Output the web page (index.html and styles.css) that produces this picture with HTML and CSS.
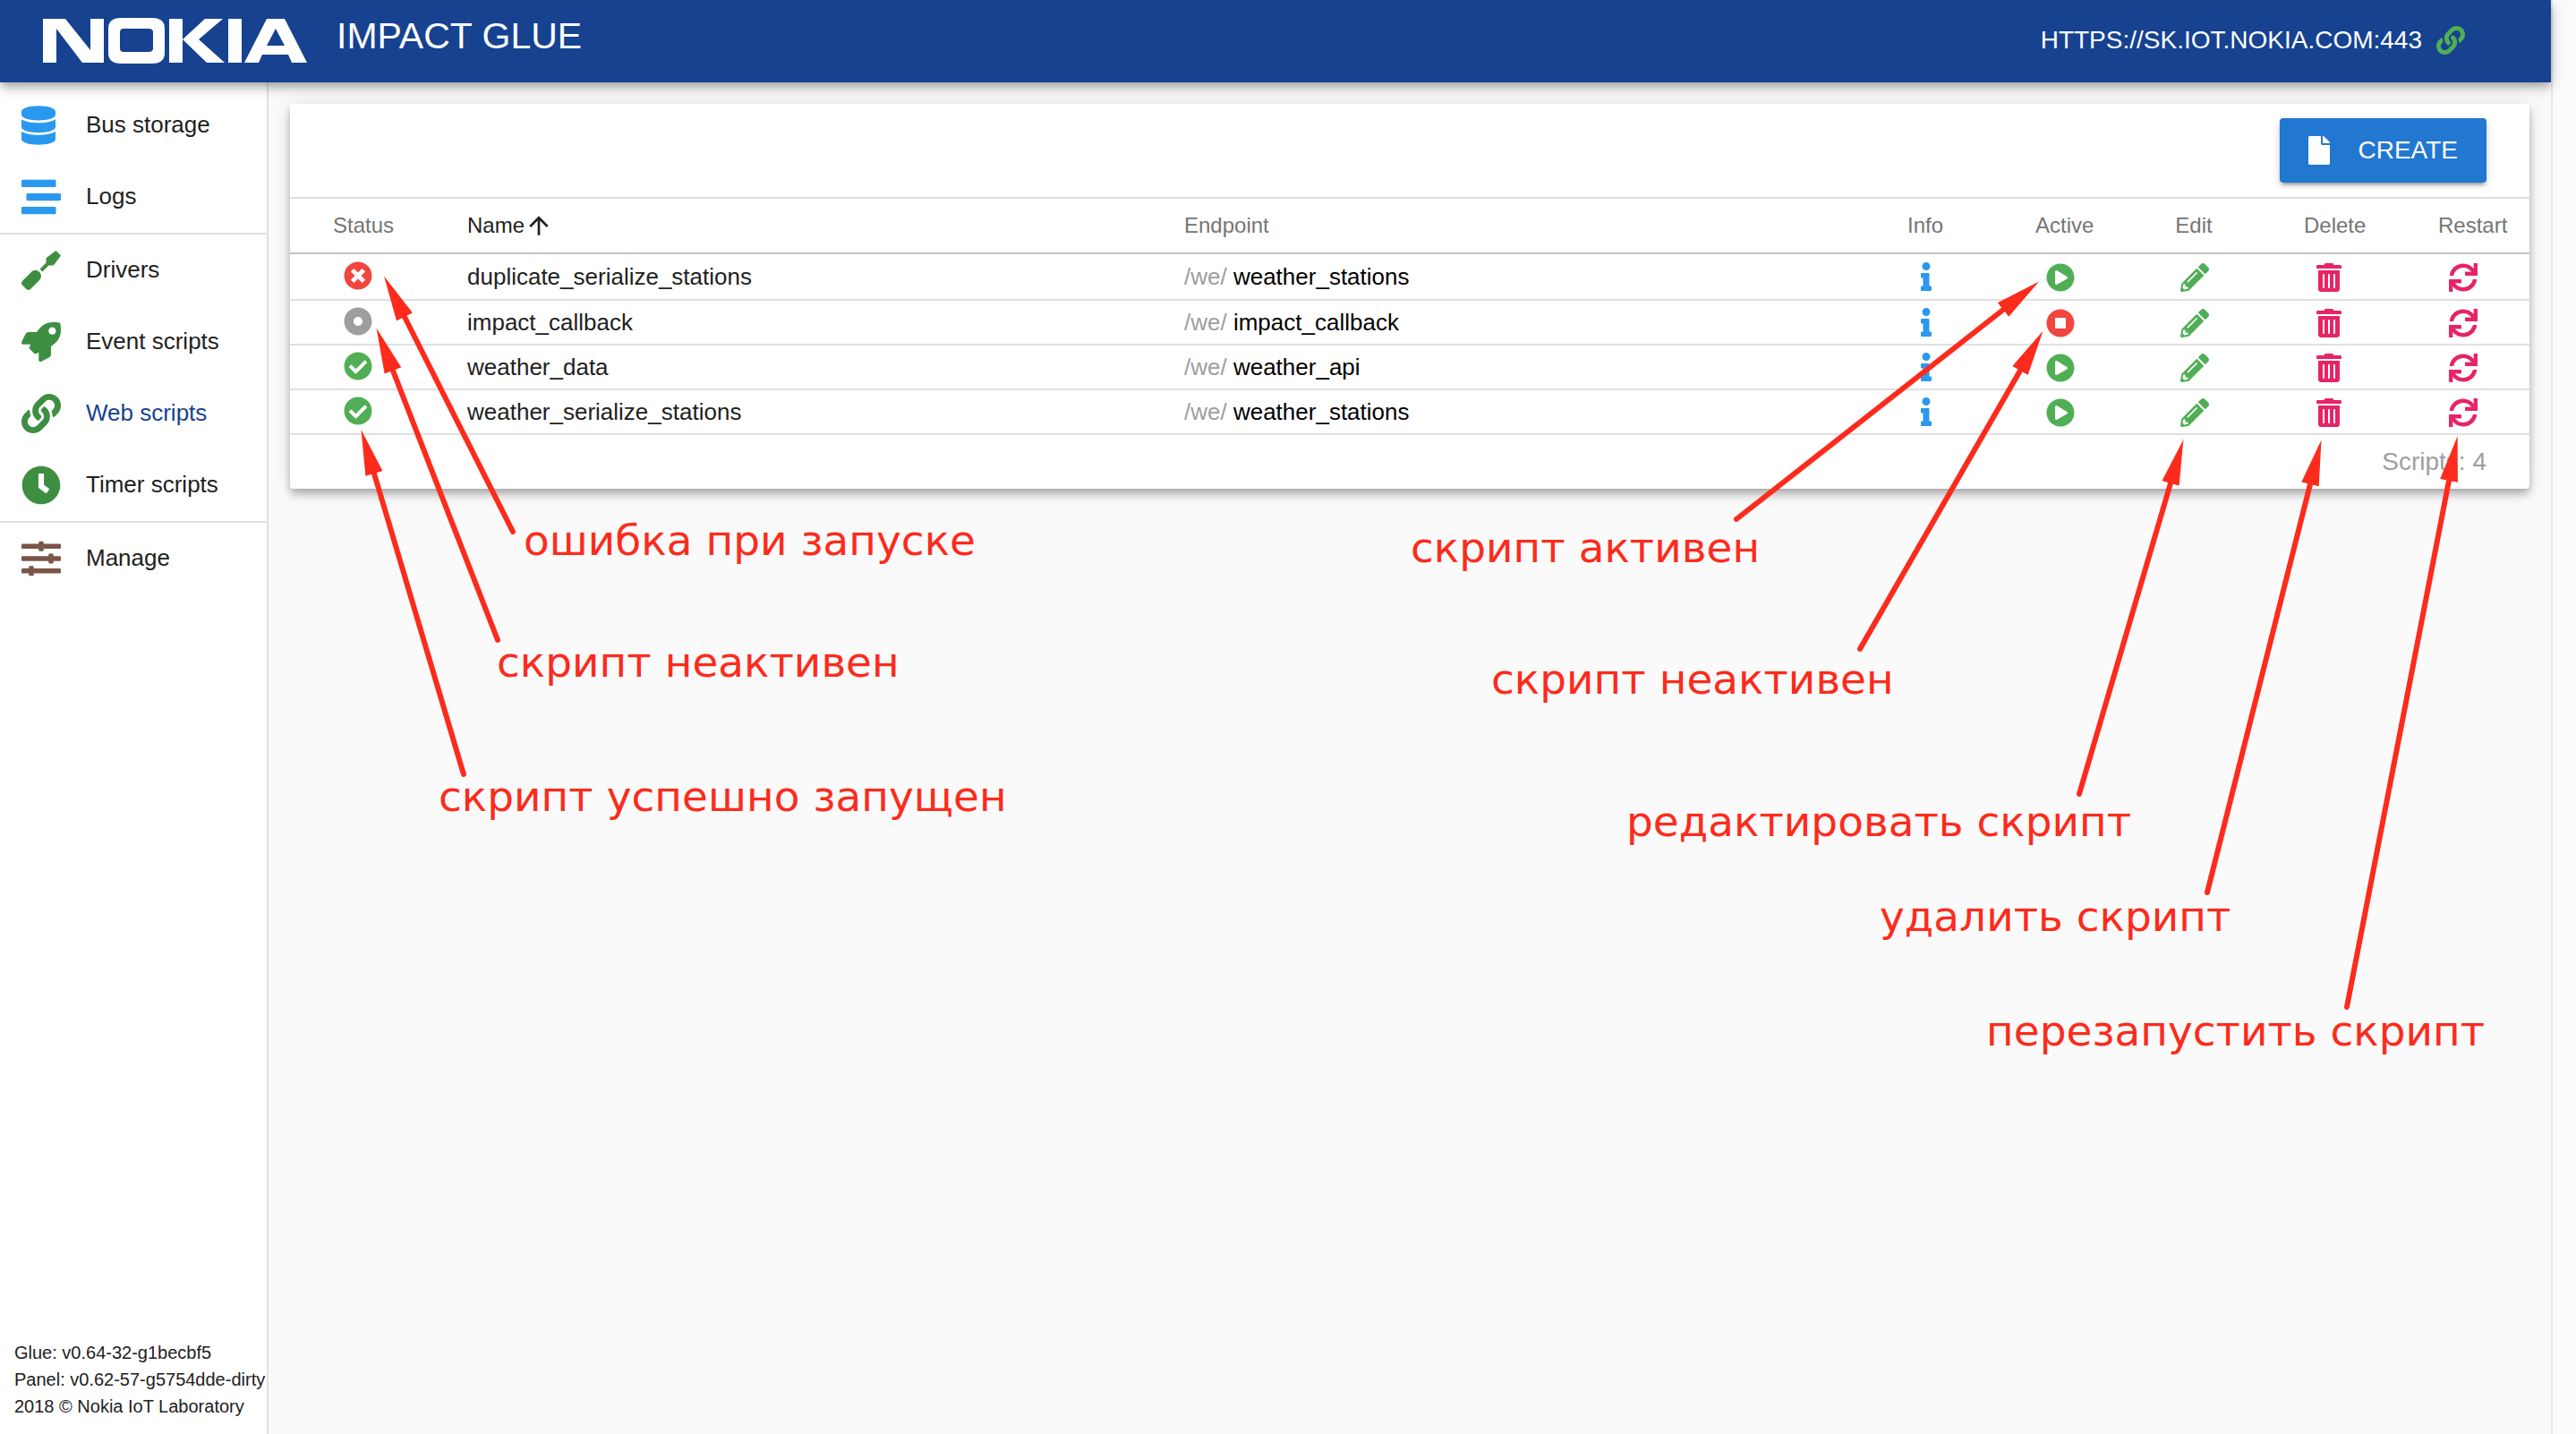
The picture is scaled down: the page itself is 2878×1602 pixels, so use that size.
FILE: index.html
```html
<!DOCTYPE html>
<html lang="en">
<head>
<meta charset="utf-8">
<title>IMPACT GLUE</title>
<link rel="stylesheet" href="styles.css">
</head>
<body>
<svg class="sprite" aria-hidden="true">
  <symbol id="database" viewBox="0 0 448 512"><path d="M448 73.143v45.714C448 159.143 347.667 192 224 192S0 159.143 0 118.857V73.143C0 32.857 100.333 0 224 0s224 32.857 224 73.143zM448 176v102.857C448 319.143 347.667 352 224 352S0 319.143 0 278.857V176c48.125 33.143 136.208 48.572 224 48.572S399.874 209.143 448 176zm0 160v102.857C448 479.143 347.667 512 224 512S0 479.143 0 438.857V336c48.125 33.143 136.208 48.572 224 48.572S399.874 369.143 448 336z"/></symbol>
  <symbol id="stream" viewBox="0 0 512 512"><path d="M16 128h416c8.84 0 16-7.16 16-16V48c0-8.84-7.16-16-16-16H16C7.16 32 0 39.16 0 48v64c0 8.84 7.16 16 16 16zm480 80H80c-8.84 0-16 7.16-16 16v64c0 8.84 7.16 16 16 16h416c8.84 0 16-7.16 16-16v-64c0-8.84-7.16-16-16-16zm-64 176H16c-8.84 0-16 7.16-16 16v64c0 8.84 7.16 16 16 16h416c8.84 0 16-7.16 16-16v-64c0-8.84-7.16-16-16-16z"/></symbol>
  <symbol id="screwdriver" viewBox="0 0 512 512"><path d="M448 0L320 96v62.06l-83.03 83.03c6.79 4.25 13.27 9.06 19.07 14.87 5.8 5.8 10.62 12.28 14.87 19.07L353.94 192H416l96-128-64-64zM128 278.59L10.92 395.67c-14.55 14.55-14.55 38.15 0 52.71l52.7 52.7c14.56 14.56 38.15 14.56 52.71 0L233.41 384c29.11-29.11 29.11-76.3 0-105.41s-76.3-29.11-105.41 0z"/></symbol>
  <symbol id="rocket" viewBox="0 0 512 512"><path d="M505.1 19.1C503.8 13 499 8.2 492.9 6.9 460.7 0 435.5 0 410.4 0 307.2 0 245.3 55.2 199.1 128H94.9c-18.2 0-34.8 10.3-42.9 26.5L2.6 253.3c-8 16 3.6 34.7 21.5 34.7h95.1c-5.9 12.8-11.9 25.5-18 37.7-3.1 6.2-1.9 13.6 3 18.5l63.6 63.6c4.9 4.9 12.3 6.1 18.5 3 12.2-6.1 24.9-12 37.7-17.9V488c0 17.8 18.8 29.4 34.7 21.5l98.7-49.4c16.3-8.1 26.5-24.8 26.5-42.9V312.8c72.6-46.3 128-108.4 128-211.1.1-25.2.1-50.4-6.8-82.6zM400 160c-26.5 0-48-21.5-48-48s21.5-48 48-48 48 21.5 48 48-21.5 48-48 48z"/></symbol>
  <symbol id="link" viewBox="0 0 512 512"><path d="M326.612 185.391c59.747 59.809 58.927 155.698.36 214.59-.11.12-.24.25-.36.37l-67.2 67.2c-59.27 59.27-155.699 59.262-214.96 0-59.27-59.26-59.27-155.7 0-214.96l37.106-37.106c9.84-9.84 26.786-3.3 27.294 10.606.648 17.722 3.826 35.527 9.69 52.721 1.986 5.822.567 12.262-3.783 16.612l-13.087 13.087c-28.026 28.026-28.905 73.66-1.155 101.96 28.024 28.579 74.086 28.749 102.325.51l67.2-67.19c28.191-28.191 28.073-73.757 0-101.83-3.701-3.694-7.429-6.564-10.341-8.569a16.037 16.037 0 0 1-6.947-12.606c-.396-10.567 3.348-21.456 11.698-29.806l21.054-21.055c5.521-5.521 14.182-6.199 20.584-1.731a152.482 152.482 0 0 1 20.522 17.197zM467.547 44.449c-59.261-59.262-155.69-59.27-214.96 0l-67.2 67.2c-.12.12-.25.25-.36.37-58.566 58.892-59.387 154.781.36 214.59a152.454 152.454 0 0 0 20.521 17.196c6.402 4.468 15.064 3.789 20.584-1.731l21.054-21.055c8.35-8.35 12.094-19.239 11.698-29.806a16.037 16.037 0 0 0-6.947-12.606c-2.912-2.005-6.64-4.875-10.341-8.569-28.073-28.073-28.191-73.639 0-101.83l67.2-67.19c28.239-28.239 74.3-28.069 102.325.51 27.75 28.3 26.872 73.934-1.155 101.96l-13.087 13.087c-4.35 4.35-5.769 10.79-3.783 16.612 5.864 17.194 9.042 34.999 9.69 52.721.509 13.906 17.454 20.446 27.294 10.606l37.106-37.106c59.271-59.259 59.271-155.699.001-214.959z"/></symbol>
  <symbol id="clock" viewBox="0 0 512 512"><path d="M256 8C119 8 8 119 8 256s111 248 248 248 248-111 248-248S393 8 256 8zm57.1 350.1L224.9 294c-3.1-2.3-4.9-5.9-4.9-9.7V116c0-6.6 5.4-12 12-12h48c6.6 0 12 5.4 12 12v137.7l63.5 46.2c5.4 3.9 6.5 11.4 2.6 16.8l-28.2 38.8c-3.9 5.3-11.4 6.5-16.8 2.6z"/></symbol>
  <symbol id="sliders" viewBox="0 0 512 512"><path d="M496 384H160v-16c0-8.8-7.2-16-16-16h-32c-8.8 0-16 7.2-16 16v16H16c-8.8 0-16 7.2-16 16v32c0 8.8 7.2 16 16 16h80v16c0 8.8 7.2 16 16 16h32c8.8 0 16-7.2 16-16v-16h336c8.8 0 16-7.2 16-16v-32c0-8.8-7.2-16-16-16zm0-160h-80v-16c0-8.8-7.2-16-16-16h-32c-8.8 0-16 7.2-16 16v16H16c-8.8 0-16 7.2-16 16v32c0 8.8 7.2 16 16 16h336v16c0 8.8 7.2 16 16 16h32c8.8 0 16-7.2 16-16v-16h80c8.8 0 16-7.2 16-16v-32c0-8.8-7.2-16-16-16zm0-160H288V48c0-8.8-7.2-16-16-16h-32c-8.8 0-16 7.2-16 16v16H16C7.2 64 0 71.2 0 80v32c0 8.8 7.2 16 16 16h208v16c0 8.8 7.2 16 16 16h32c8.8 0 16-7.2 16-16v-16h208c8.8 0 16-7.2 16-16V80c0-8.8-7.2-16-16-16z"/></symbol>
  <symbol id="times-circle" viewBox="0 0 512 512"><path d="M256 8C119 8 8 119 8 256s111 248 248 248 248-111 248-248S393 8 256 8zm121.6 313.1c4.7 4.7 4.7 12.3 0 17L338 377.6c-4.7 4.7-12.3 4.7-17 0L256 312l-65.1 65.6c-4.7 4.7-12.3 4.7-17 0L134.4 338c-4.7-4.7-4.7-12.3 0-17l65.6-65-65.6-65.1c-4.7-4.7-4.7-12.3 0-17l39.6-39.6c4.7-4.7 12.3-4.7 17 0l65 65.7 65.1-65.6c4.7-4.7 12.3-4.7 17 0l39.6 39.6c4.7 4.7 4.7 12.3 0 17L312 256l65.6 65.1z"/></symbol>
  <symbol id="dot-circle" viewBox="0 0 512 512"><path d="M256 8C119.033 8 8 119.033 8 256s111.033 248 248 248 248-111.033 248-248S392.967 8 256 8zm80 248c0 44.112-35.888 80-80 80s-80-35.888-80-80 35.888-80 80-80 80 35.888 80 80z" fill-rule="evenodd"/></symbol>
  <symbol id="check-circle" viewBox="0 0 512 512"><path fill-rule="evenodd" d="M504 256c0 136.967-111.033 248-248 248S8 392.967 8 256 119.033 8 256 8s248 111.033 248 248zM227.314 387.314l184-184c6.248-6.248 6.248-16.379 0-22.627l-22.627-22.627c-6.248-6.249-16.379-6.249-22.628 0L216 308.118l-70.059-70.059c-6.248-6.248-16.379-6.248-22.628 0l-22.627 22.627c-6.248 6.248-6.248 16.379 0 22.627l104 104c6.249 6.249 16.379 6.249 22.628.001z"/></symbol>
  <symbol id="play-circle" viewBox="0 0 512 512"><path fill-rule="evenodd" d="M371.7 238l-176-107c-15.8-8.8-35.7 2.5-35.7 21v208c0 18.4 19.8 29.8 35.7 21l176-101c16.4-9.1 16.4-32.8 0-42zM504 256C504 119 393 8 256 8S8 119 8 256s111 248 248 248 248-111 248-248z"/></symbol>
  <symbol id="stop-circle" viewBox="0 0 512 512"><path fill-rule="evenodd" d="M256 8C119 8 8 119 8 256s111 248 248 248 248-111 248-248S393 8 256 8zm96 328c0 8.8-7.2 16-16 16H176c-8.8 0-16-7.2-16-16V176c0-8.8 7.2-16 16-16h160c8.8 0 16 7.2 16 16v160z"/></symbol>
  <symbol id="info" viewBox="0 0 192 512"><path d="M20 424.229h20V279.771H20c-11.046 0-20-8.954-20-20V212c0-11.046 8.954-20 20-20h112c11.046 0 20 8.954 20 20v212.229h20c11.046 0 20 8.954 20 20V492c0 11.046-8.954 20-20 20H20c-11.046 0-20-8.954-20-20v-47.771c0-11.046 8.954-20 20-20zM96 0C56.235 0 24 32.235 24 72s32.235 72 72 72 72-32.235 72-72S135.764 0 96 0z"/></symbol>
  <symbol id="pencil" viewBox="0 0 512 512"><path fill-rule="evenodd" d="M497.9 142.1l-46.1 46.1c-4.7 4.7-12.3 4.7-17 0l-111-111c-4.7-4.7-4.7-12.3 0-17l46.1-46.1c18.7-18.7 49.1-18.7 67.9 0l60.1 60.1c18.8 18.7 18.8 49.1 0 67.9zM284.2 99.8L21.6 362.4.4 483.9c-2.9 16.4 11.4 30.6 27.8 27.8l121.5-21.3 262.6-262.6c4.7-4.7 4.7-12.3 0-17l-111-111c-4.8-4.7-12.4-4.7-17.1 0zM124.1 339.9c-5.5-5.5-5.5-14.3 0-19.8l154-154c5.5-5.5 14.3-5.5 19.8 0s5.5 14.3 0 19.8l-154 154c-5.5 5.5-14.3 5.5-19.8 0zM88 424h48v36.3l-64.5 11.3-31.1-31.1L51.7 376H88v48z"/></symbol>
  <symbol id="trash" viewBox="0 0 448 512"><path fill-rule="evenodd" d="M0 84V56c0-13.3 10.7-24 24-24h112l9.4-18.7c4-8.2 12.3-13.3 21.4-13.3h114.3c9.1 0 17.4 5.1 21.5 13.3L312 32h112c13.3 0 24 10.7 24 24v28c0 6.6-5.4 12-12 12H12C5.4 96 0 90.6 0 84zm416 56v324c0 26.5-21.5 48-48 48H80c-26.5 0-48-21.5-48-48V140c0-6.6 5.4-12 12-12h360c6.6 0 12 5.4 12 12zm-272 68c0-8.8-7.2-16-16-16s-16 7.2-16 16v224c0 8.8 7.2 16 16 16s16-7.2 16-16V208zm96 0c0-8.8-7.2-16-16-16s-16 7.2-16 16v224c0 8.8 7.2 16 16 16s16-7.2 16-16V208zm96 0c0-8.8-7.2-16-16-16s-16 7.2-16 16v224c0 8.8 7.2 16 16 16s16-7.2 16-16V208z"/></symbol>
  <symbol id="sync" viewBox="0 0 512 512"><path d="M440.935 12.574l3.966 82.766C399.416 41.904 331.674 8 256 8 134.813 8 33.933 94.924 12.296 209.824 10.908 217.193 16.604 224 24.103 224h49.084c5.57 0 10.377-3.842 11.676-9.259C103.407 137.408 172.931 80 256 80c60.893 0 114.512 30.856 146.104 77.801l-101.53-4.865c-6.845-.328-12.574 5.133-12.574 11.986v47.411c0 6.627 5.373 12 12 12h200.333c6.627 0 12-5.373 12-12V12c0-6.627-5.373-12-12-12h-47.411c-6.853 0-12.315 5.729-11.987 12.574zM256 432c-60.895 0-114.517-30.858-146.109-77.805l101.868 4.871c6.845.327 12.573-5.134 12.573-11.986v-47.412c0-6.627-5.373-12-12-12H12c-6.627 0-12 5.373-12 12V500c0 6.627 5.373 12 12 12h47.385c6.863 0 12.328-5.745 11.985-12.599l-4.129-82.575C112.725 470.166 180.405 504 256 504c121.187 0 222.067-86.924 243.704-201.824 1.388-7.369-4.308-14.176-11.807-14.176h-49.084c-5.57 0-10.377 3.842-11.676 9.259C408.593 374.592 339.069 432 256 432z"/></symbol>
  <symbol id="file" viewBox="0 0 384 512"><path d="M224 136V0H24C10.7 0 0 10.7 0 24v464c0 13.3 10.7 24 24 24h336c13.3 0 24-10.7 24-24V160H248c-13.2 0-24-10.8-24-24zm160-14.1v6.1H256V0h6.1c6.4 0 12.5 2.5 17 7l97.9 98c4.5 4.5 7 10.6 7 16.9z"/></symbol>
  <symbol id="arrow-up" viewBox="0 0 24 24"><path d="M4 12l1.41 1.41L11 7.83V20h2V7.83l5.58 5.59L20 12l-8-8-8 8z"/></symbol>
</svg>

<div class="app">
  <header class="topbar">
    <svg class="logo" viewBox="0 0 296 50" role="img" aria-label="Nokia">
      <path d="M0 49V0h25l28 35V0h15v49H44L15 11v38z"/>
      <path fill-rule="evenodd" d="M87-1h35q14 0 14 12v27q0 12-14 12H87q-14 0-14-12V11Q73-1 87-1zm3 12q-4 0-4 4v18q0 4 4 4h28q5 0 5-4V15q0-4-5-4z"/>
      <path d="M141 0h15v49h-15zM156 23l25-23h20l-27 23 29 26h-20zM207 0h15v49h-15z"/>
      <path fill-rule="evenodd" d="M225 49L250 0h20l25 49h-17l-4-9h-29l-4 9zm25-19h20L260 11z"/>
    </svg>
    <h1 class="title">IMPACT GLUE</h1>
    <a class="server" href="#server">HTTPS://SK.IOT.NOKIA.COM:443 <svg class="icon light-green"><use href="#link"/></svg></a>
  </header>

  <div class="body">
    <aside class="sidebar">
      <nav class="nav">
        <ul class="group">
          <li><a class="item" href="#bus"><svg class="nav-icon narrow blue"><use href="#database"/></svg><span class="label">Bus storage</span></a></li>
          <li><a class="item" href="#logs"><svg class="nav-icon blue"><use href="#stream"/></svg><span class="label">Logs</span></a></li>
        </ul>
        <ul class="group">
          <li><a class="item" href="#drivers"><svg class="nav-icon green"><use href="#screwdriver"/></svg><span class="label">Drivers</span></a></li>
          <li><a class="item" href="#events"><svg class="nav-icon green"><use href="#rocket"/></svg><span class="label">Event scripts</span></a></li>
          <li><a class="item current" href="#web" aria-current="page"><svg class="nav-icon green"><use href="#link"/></svg><span class="label">Web scripts</span></a></li>
          <li><a class="item" href="#timers"><svg class="nav-icon green"><use href="#clock"/></svg><span class="label">Timer scripts</span></a></li>
        </ul>
        <ul class="group">
          <li><a class="item" href="#manage"><svg class="nav-icon brown"><use href="#sliders"/></svg><span class="label">Manage</span></a></li>
        </ul>
      </nav>
      <footer class="versions">
        <div>Glue: v0.64-32-g1becbf5</div>
        <div>Panel: v0.62-57-g5754dde-dirty</div>
        <div>2018 © Nokia IoT Laboratory</div>
      </footer>
    </aside>

    <main class="content">
      <section class="card">
        <div class="toolbar">
          <button class="create" type="button"><svg class="file-icon"><use href="#file"/></svg>CREATE</button>
        </div>
        <table class="scripts">
          <colgroup><col class="col-small"><col><col><col class="col-small"><col class="col-small"><col class="col-small"><col class="col-small"><col class="col-small"></colgroup>
          <thead>
            <tr>
              <th>Status</th>
              <th class="sorted"><button class="sort" type="button">Name<svg class="icon"><use href="#arrow-up"/></svg></button></th>
              <th>Endpoint</th>
              <th class="mid">Info</th><th class="mid">Active</th><th class="mid">Edit</th><th class="mid">Delete</th><th class="mid">Restart</th>
            </tr>
          </thead>
          <tbody>
            <tr>
              <td class="status"><svg class="icon red" role="img" aria-label="Error"><use href="#times-circle"/></svg></td>
              <td>duplicate_serialize_stations</td>
              <td><span class="prefix">/we/</span> <span class="path">weather_stations</span></td>
              <td class="mid"><button type="button" aria-label="Info"><svg class="icon blue"><use href="#info"/></svg></button></td>
              <td class="act"><button type="button" aria-label="Active"><svg class="icon light-green"><use href="#play-circle"/></svg></button></td>
              <td class="act"><button type="button" aria-label="Edit"><svg class="icon light-green"><use href="#pencil"/></svg></button></td>
              <td class="act"><button type="button" aria-label="Delete"><svg class="icon pink"><use href="#trash"/></svg></button></td>
              <td class="act"><button type="button" aria-label="Restart"><svg class="icon pink"><use href="#sync"/></svg></button></td>
            </tr>
            <tr>
              <td class="status"><svg class="icon grey" role="img" aria-label="Inactive"><use href="#dot-circle"/></svg></td>
              <td>impact_callback</td>
              <td><span class="prefix">/we/</span> <span class="path">impact_callback</span></td>
              <td class="mid"><button type="button" aria-label="Info"><svg class="icon blue"><use href="#info"/></svg></button></td>
              <td class="act"><button type="button" aria-label="Inactive"><svg class="icon red"><use href="#stop-circle"/></svg></button></td>
              <td class="act"><button type="button" aria-label="Edit"><svg class="icon light-green"><use href="#pencil"/></svg></button></td>
              <td class="act"><button type="button" aria-label="Delete"><svg class="icon pink"><use href="#trash"/></svg></button></td>
              <td class="act"><button type="button" aria-label="Restart"><svg class="icon pink"><use href="#sync"/></svg></button></td>
            </tr>
            <tr>
              <td class="status"><svg class="icon light-green" role="img" aria-label="Running"><use href="#check-circle"/></svg></td>
              <td>weather_data</td>
              <td><span class="prefix">/we/</span> <span class="path">weather_api</span></td>
              <td class="mid"><button type="button" aria-label="Info"><svg class="icon blue"><use href="#info"/></svg></button></td>
              <td class="act"><button type="button" aria-label="Active"><svg class="icon light-green"><use href="#play-circle"/></svg></button></td>
              <td class="act"><button type="button" aria-label="Edit"><svg class="icon light-green"><use href="#pencil"/></svg></button></td>
              <td class="act"><button type="button" aria-label="Delete"><svg class="icon pink"><use href="#trash"/></svg></button></td>
              <td class="act"><button type="button" aria-label="Restart"><svg class="icon pink"><use href="#sync"/></svg></button></td>
            </tr>
            <tr>
              <td class="status"><svg class="icon light-green" role="img" aria-label="Running"><use href="#check-circle"/></svg></td>
              <td>weather_serialize_stations</td>
              <td><span class="prefix">/we/</span> <span class="path">weather_stations</span></td>
              <td class="mid"><button type="button" aria-label="Info"><svg class="icon blue"><use href="#info"/></svg></button></td>
              <td class="act"><button type="button" aria-label="Active"><svg class="icon light-green"><use href="#play-circle"/></svg></button></td>
              <td class="act"><button type="button" aria-label="Edit"><svg class="icon light-green"><use href="#pencil"/></svg></button></td>
              <td class="act"><button type="button" aria-label="Delete"><svg class="icon pink"><use href="#trash"/></svg></button></td>
              <td class="act"><button type="button" aria-label="Restart"><svg class="icon pink"><use href="#sync"/></svg></button></td>
            </tr>
          </tbody>
        </table>
        <div class="total">Scripts: 4</div>
      </section>
    </main>
  </div>
</div>
<div class="gutter"></div>

<!-- Help notes drawn over the page -->
<svg class="notes">
  <defs>
    <marker id="head" markerUnits="userSpaceOnUse" markerWidth="54" markerHeight="24" refX="0" refY="12" orient="auto"><path class="note-head" d="M0 2L51 12L0 22z"/></marker>
  </defs>
  <g class="note-lines">
    <line x1="573" y1="594" x2="452" y2="354"/>
    <line x1="556" y1="715" x2="439" y2="414"/>
    <line x1="518" y1="865" x2="418" y2="529"/>
    <line x1="1940" y1="580" x2="2238" y2="346"/>
    <line x1="2078" y1="725" x2="2257" y2="414"/>
    <line x1="2323" y1="887" x2="2425" y2="540"/>
    <line x1="2466" y1="997" x2="2581" y2="541"/>
    <line x1="2622" y1="1125" x2="2736" y2="537"/>
  </g>
  <g class="note-text">
    <text x="585" y="620">ошибка при запуске</text>
    <text x="555" y="756">скрипт неактивен</text>
    <text x="490" y="906">скрипт успешно запущен</text>
    <text x="1576" y="628">скрипт активен</text>
    <text x="1666" y="775">скрипт неактивен</text>
    <text x="1817" y="934">редактировать скрипт</text>
    <text x="2100" y="1040">удалить скрипт</text>
    <text x="2219" y="1168">перезапустить скрипт</text>
  </g>
</svg>
</body>
</html>
```
FILE: styles.css
```css
* { box-sizing: border-box; }

body {
  margin: 0;
  min-height: 100vh;
  display: flex;
  position: relative;
  font-family: "Liberation Sans", Arial, sans-serif;
  font-size: 26px;
  color: #212121;
  background: #fafafa;
}

.sprite { position: absolute; width: 0; height: 0; }

button {
  font: inherit;
  color: inherit;
  background: none;
  border: 0;
  padding: 0;
  cursor: pointer;
}

.app { flex: 1; min-width: 0; display: flex; flex-direction: column; }

.gutter {
  width: 28px;
  border-left: 2px solid #e8e8e8;
  background: #fbfbfb;
}

.topbar {
  position: relative;
  z-index: 1;
  height: 92px;
  display: flex;
  align-items: center;
  padding: 0 96px 0 48px;
  background: #16428f;
  color: #fff;
  box-shadow: 0 4px 8px -2px rgba(0, 0, 0, .2), 0 8px 10px rgba(0, 0, 0, .14), 0 2px 20px rgba(0, 0, 0, .12);
}

.logo { width: 296px; height: 50px; overflow: visible; fill: #fff; }
.title { margin: 0 auto 12px 32px; font-size: 41px; line-height: 40px; font-weight: 400; }
.server {
  display: flex;
  align-items: center;
  gap: 16px;
  padding-bottom: 2px;
  font-size: 28px;
  color: #fff;
  text-decoration: none;
}

.icon { display: block; width: 32px; height: 32px; fill: currentColor; }
.blue { color: #2b98f0; }
.green { color: #3e8e41; }
.light-green { color: #50ae55; }
.brown { color: #795649; }
.red { color: #f2453d; }
.grey { color: #9e9e9e; }
.pink { color: #e62565; }

.body { flex: 1; display: flex; }

.sidebar {
  width: 300px;
  display: flex;
  flex-direction: column;
  justify-content: space-between;
  background: #fff;
  border-right: 2px solid #e0e0e0;
}
.nav { padding-top: 8px; }
.group { margin: 0; padding: 0; list-style: none; }
.group + .group { border-top: 2px solid #e0e0e0; }
.item {
  display: grid;
  grid-template-columns: 72px 1fr;
  align-items: center;
  height: 80px;
  padding-left: 24px;
  color: #212121;
  text-decoration: none;
}
.item.current { color: #16428f; }
.label { padding-bottom: 2px; }
.nav-icon { width: 44px; height: 44px; fill: currentColor; }
.nav-icon.narrow { width: 38px; }

.versions { padding: 16px; font-size: 20px; line-height: 30px; white-space: nowrap; }

.content { flex: 1; min-width: 0; padding: 24px; }

.card {
  background: #fff;
  border-radius: 4px;
  box-shadow: 0 4px 8px -2px rgba(0, 0, 0, .2), 0 8px 10px rgba(0, 0, 0, .14), 0 2px 20px rgba(0, 0, 0, .12);
}

.toolbar {
  display: flex;
  justify-content: flex-end;
  padding: 16px 48px;
  border-bottom: 2px solid #e0e0e0;
}
.create {
  display: flex;
  align-items: center;
  gap: 32px;
  height: 72px;
  padding: 0 32px;
  font-size: 28px;
  color: #fff;
  background: #2277d1;
  border-radius: 4px;
  box-shadow: 0 6px 2px -4px rgba(0, 0, 0, .2), 0 4px 4px rgba(0, 0, 0, .14), 0 2px 10px rgba(0, 0, 0, .12);
}
.file-icon { width: 24px; height: 32px; fill: currentColor; }

.scripts { width: 100%; table-layout: fixed; border-collapse: separate; border-spacing: 0; }
.col-small { width: 150px; }

th, td { padding: 0 48px; text-align: left; white-space: nowrap; }
th {
  height: 62px;
  font-size: 24px;
  font-weight: 400;
  color: #757575;
  border-bottom: 2px solid #c4c4c4;
}
.sorted { color: #212121; }
.sort { display: flex; align-items: center; }
td { height: 50px; border-bottom: 2px solid #e0e0e0; }
tbody tr:first-child td { height: 52px; }

.mid, .act { text-align: center; }
.act { padding-top: 2px; }
.status { padding-bottom: 2px; }
td.mid, td.act, td.status { padding-left: 50px; }
.status .icon { margin: 0 auto; }
td button { display: block; margin: 0 auto; }
.prefix { color: #9e9e9e; }
.path { color: #000; }

.total {
  height: 60px;
  padding: 0 48px;
  line-height: 60px;
  font-size: 28px;
  text-align: right;
  color: #9e9e9e;
}

.notes {
  position: absolute;
  inset: 0;
  width: 100%;
  height: 100%;
  z-index: 2;
  pointer-events: none;
}
.note-lines { stroke: #fc2b1c; stroke-width: 6px; stroke-linecap: round; }
.note-lines line { marker-end: url(#head); }
.note-head { fill: #fc2b1c; stroke: none; }
.note-text { fill: #fc2b1c; font-family: "DejaVu Sans", Verdana, sans-serif; font-size: 47px; }
```
